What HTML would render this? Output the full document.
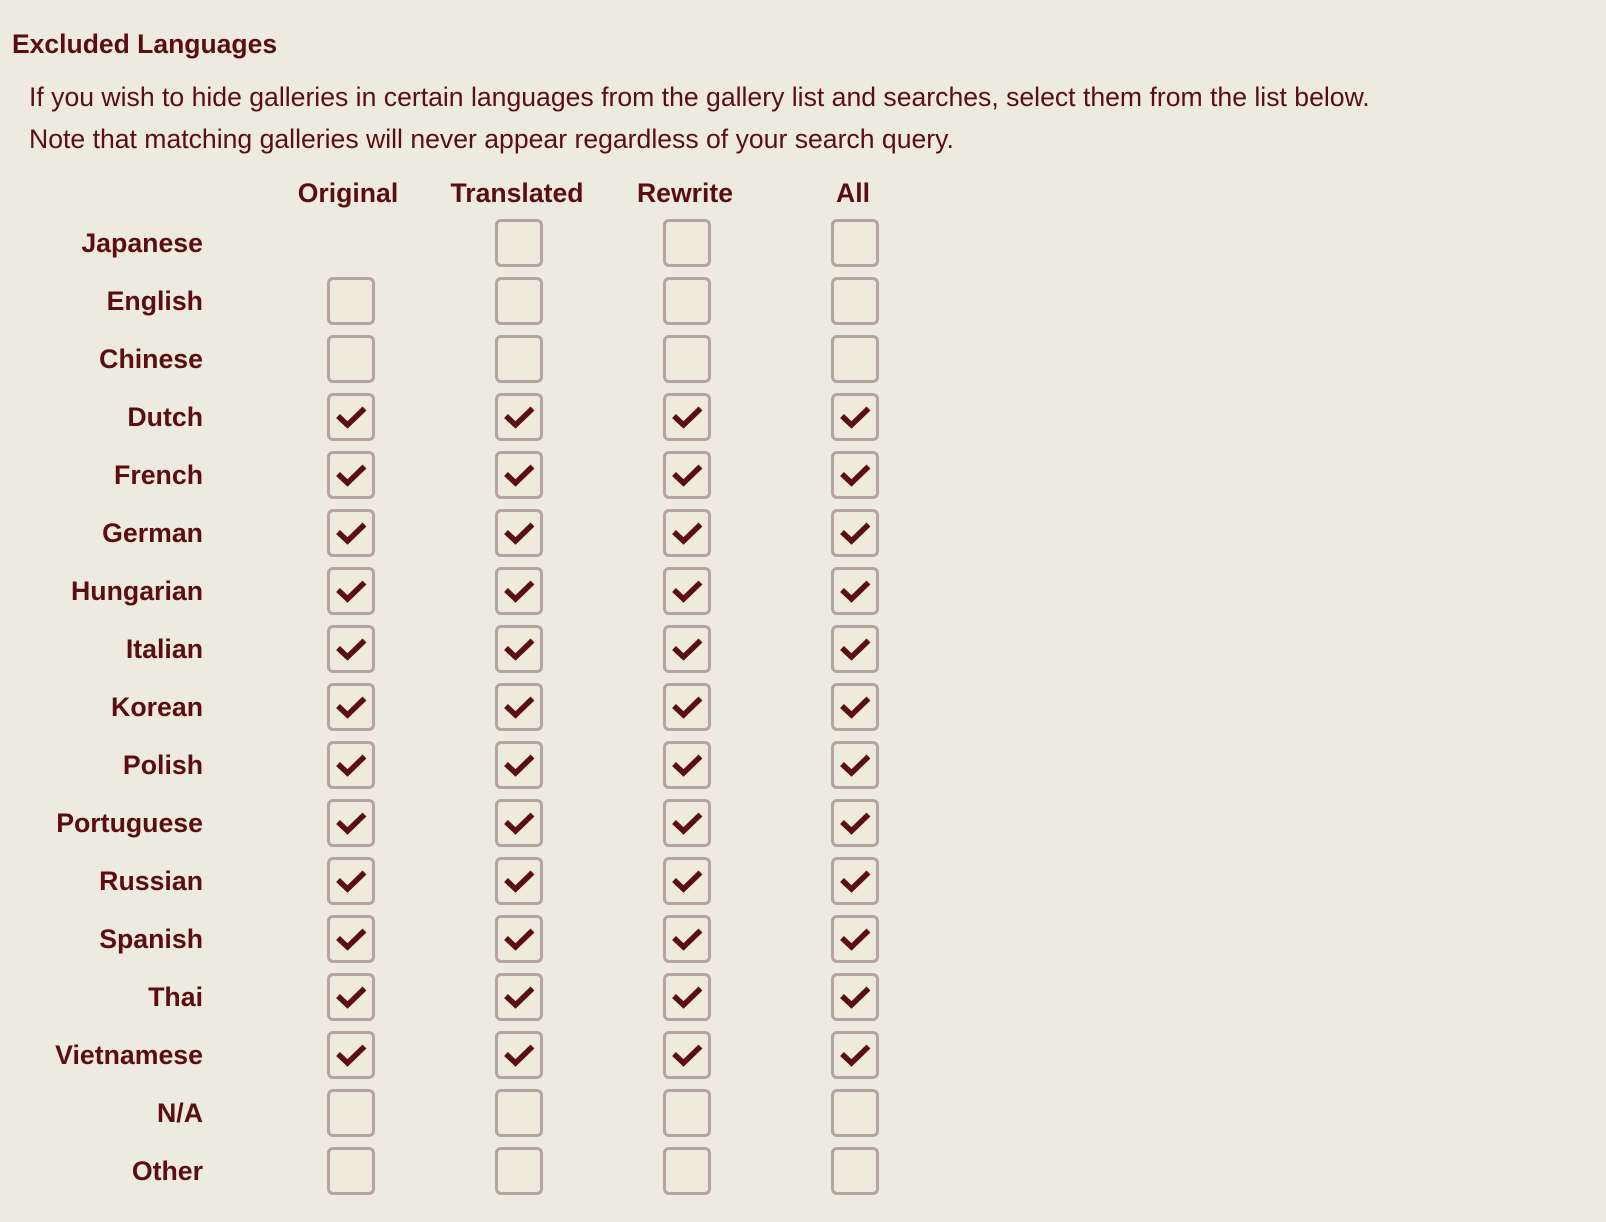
<!DOCTYPE html>
<html><head><meta charset="utf-8"><style>
html,body{margin:0;padding:0;}
body{width:1606px;height:1222px;background:#EDEAE0;color:#5C0D12;font-family:"Liberation Sans",Arial,sans-serif;position:relative;overflow:hidden;}
h1{position:absolute;left:12px;top:28px;margin:0;font-size:26.5px;font-weight:bold;line-height:32px;}
p{position:absolute;left:29px;margin:0;font-size:26.6px;line-height:30px;}
.hd{position:absolute;top:178px;font-size:26.6px;font-weight:bold;width:160px;text-align:center;line-height:30px;}
.row{position:absolute;left:0;height:48px;width:900px;}
.lab{position:absolute;right:697px;top:9px;font-size:26.7px;font-weight:bold;line-height:30px;white-space:nowrap;}
.b{position:absolute;top:0;width:42px;height:42px;border:3px solid #B5A4A4;border-radius:6px;background:#EEEADC;}
.b svg{position:absolute;left:-3px;top:-3px;}
.c1{left:327px}.c2{left:495px}.c3{left:663px}.c4{left:831px}
</style></head><body>
<h1>Excluded Languages</h1>
<p style="top:82px">If you wish to hide galleries in certain languages from the gallery list and searches, select them from the list below.</p>
<p style="top:124px">Note that matching galleries will never appear regardless of your search query.</p>
<div class="hd" style="left:268px">Original</div>
<div class="hd" style="left:437px">Translated</div>
<div class="hd" style="left:605px">Rewrite</div>
<div class="hd" style="left:773px">All</div>

<div class="row" style="top:219px"><div class="lab">Japanese</div><div class="b c2"></div><div class="b c3"></div><div class="b c4"></div></div>
<div class="row" style="top:277px"><div class="lab">English</div><div class="b c1"></div><div class="b c2"></div><div class="b c3"></div><div class="b c4"></div></div>
<div class="row" style="top:335px"><div class="lab">Chinese</div><div class="b c1"></div><div class="b c2"></div><div class="b c3"></div><div class="b c4"></div></div>

<svg width="0" height="0" style="position:absolute"><defs><symbol id="ck" viewBox="0 0 48 48"><polyline points="11,23 20.5,32 37.5,15.5" fill="none" stroke="#5C0D12" stroke-width="5.5"/></symbol></defs></svg>

<div class="row" style="top:393px"><div class="lab">Dutch</div><div class="b c1"><svg width="48" height="48"><use href="#ck"/></svg></div><div class="b c2"><svg width="48" height="48"><use href="#ck"/></svg></div><div class="b c3"><svg width="48" height="48"><use href="#ck"/></svg></div><div class="b c4"><svg width="48" height="48"><use href="#ck"/></svg></div></div>
<div class="row" style="top:451px"><div class="lab">French</div><div class="b c1"><svg width="48" height="48"><use href="#ck"/></svg></div><div class="b c2"><svg width="48" height="48"><use href="#ck"/></svg></div><div class="b c3"><svg width="48" height="48"><use href="#ck"/></svg></div><div class="b c4"><svg width="48" height="48"><use href="#ck"/></svg></div></div>
<div class="row" style="top:509px"><div class="lab">German</div><div class="b c1"><svg width="48" height="48"><use href="#ck"/></svg></div><div class="b c2"><svg width="48" height="48"><use href="#ck"/></svg></div><div class="b c3"><svg width="48" height="48"><use href="#ck"/></svg></div><div class="b c4"><svg width="48" height="48"><use href="#ck"/></svg></div></div>
<div class="row" style="top:567px"><div class="lab">Hungarian</div><div class="b c1"><svg width="48" height="48"><use href="#ck"/></svg></div><div class="b c2"><svg width="48" height="48"><use href="#ck"/></svg></div><div class="b c3"><svg width="48" height="48"><use href="#ck"/></svg></div><div class="b c4"><svg width="48" height="48"><use href="#ck"/></svg></div></div>
<div class="row" style="top:625px"><div class="lab">Italian</div><div class="b c1"><svg width="48" height="48"><use href="#ck"/></svg></div><div class="b c2"><svg width="48" height="48"><use href="#ck"/></svg></div><div class="b c3"><svg width="48" height="48"><use href="#ck"/></svg></div><div class="b c4"><svg width="48" height="48"><use href="#ck"/></svg></div></div>
<div class="row" style="top:683px"><div class="lab">Korean</div><div class="b c1"><svg width="48" height="48"><use href="#ck"/></svg></div><div class="b c2"><svg width="48" height="48"><use href="#ck"/></svg></div><div class="b c3"><svg width="48" height="48"><use href="#ck"/></svg></div><div class="b c4"><svg width="48" height="48"><use href="#ck"/></svg></div></div>
<div class="row" style="top:741px"><div class="lab">Polish</div><div class="b c1"><svg width="48" height="48"><use href="#ck"/></svg></div><div class="b c2"><svg width="48" height="48"><use href="#ck"/></svg></div><div class="b c3"><svg width="48" height="48"><use href="#ck"/></svg></div><div class="b c4"><svg width="48" height="48"><use href="#ck"/></svg></div></div>
<div class="row" style="top:799px"><div class="lab">Portuguese</div><div class="b c1"><svg width="48" height="48"><use href="#ck"/></svg></div><div class="b c2"><svg width="48" height="48"><use href="#ck"/></svg></div><div class="b c3"><svg width="48" height="48"><use href="#ck"/></svg></div><div class="b c4"><svg width="48" height="48"><use href="#ck"/></svg></div></div>
<div class="row" style="top:857px"><div class="lab">Russian</div><div class="b c1"><svg width="48" height="48"><use href="#ck"/></svg></div><div class="b c2"><svg width="48" height="48"><use href="#ck"/></svg></div><div class="b c3"><svg width="48" height="48"><use href="#ck"/></svg></div><div class="b c4"><svg width="48" height="48"><use href="#ck"/></svg></div></div>
<div class="row" style="top:915px"><div class="lab">Spanish</div><div class="b c1"><svg width="48" height="48"><use href="#ck"/></svg></div><div class="b c2"><svg width="48" height="48"><use href="#ck"/></svg></div><div class="b c3"><svg width="48" height="48"><use href="#ck"/></svg></div><div class="b c4"><svg width="48" height="48"><use href="#ck"/></svg></div></div>
<div class="row" style="top:973px"><div class="lab">Thai</div><div class="b c1"><svg width="48" height="48"><use href="#ck"/></svg></div><div class="b c2"><svg width="48" height="48"><use href="#ck"/></svg></div><div class="b c3"><svg width="48" height="48"><use href="#ck"/></svg></div><div class="b c4"><svg width="48" height="48"><use href="#ck"/></svg></div></div>
<div class="row" style="top:1031px"><div class="lab">Vietnamese</div><div class="b c1"><svg width="48" height="48"><use href="#ck"/></svg></div><div class="b c2"><svg width="48" height="48"><use href="#ck"/></svg></div><div class="b c3"><svg width="48" height="48"><use href="#ck"/></svg></div><div class="b c4"><svg width="48" height="48"><use href="#ck"/></svg></div></div>

<div class="row" style="top:1089px"><div class="lab">N/A</div><div class="b c1"></div><div class="b c2"></div><div class="b c3"></div><div class="b c4"></div></div>
<div class="row" style="top:1147px"><div class="lab">Other</div><div class="b c1"></div><div class="b c2"></div><div class="b c3"></div><div class="b c4"></div></div>
</body></html>
